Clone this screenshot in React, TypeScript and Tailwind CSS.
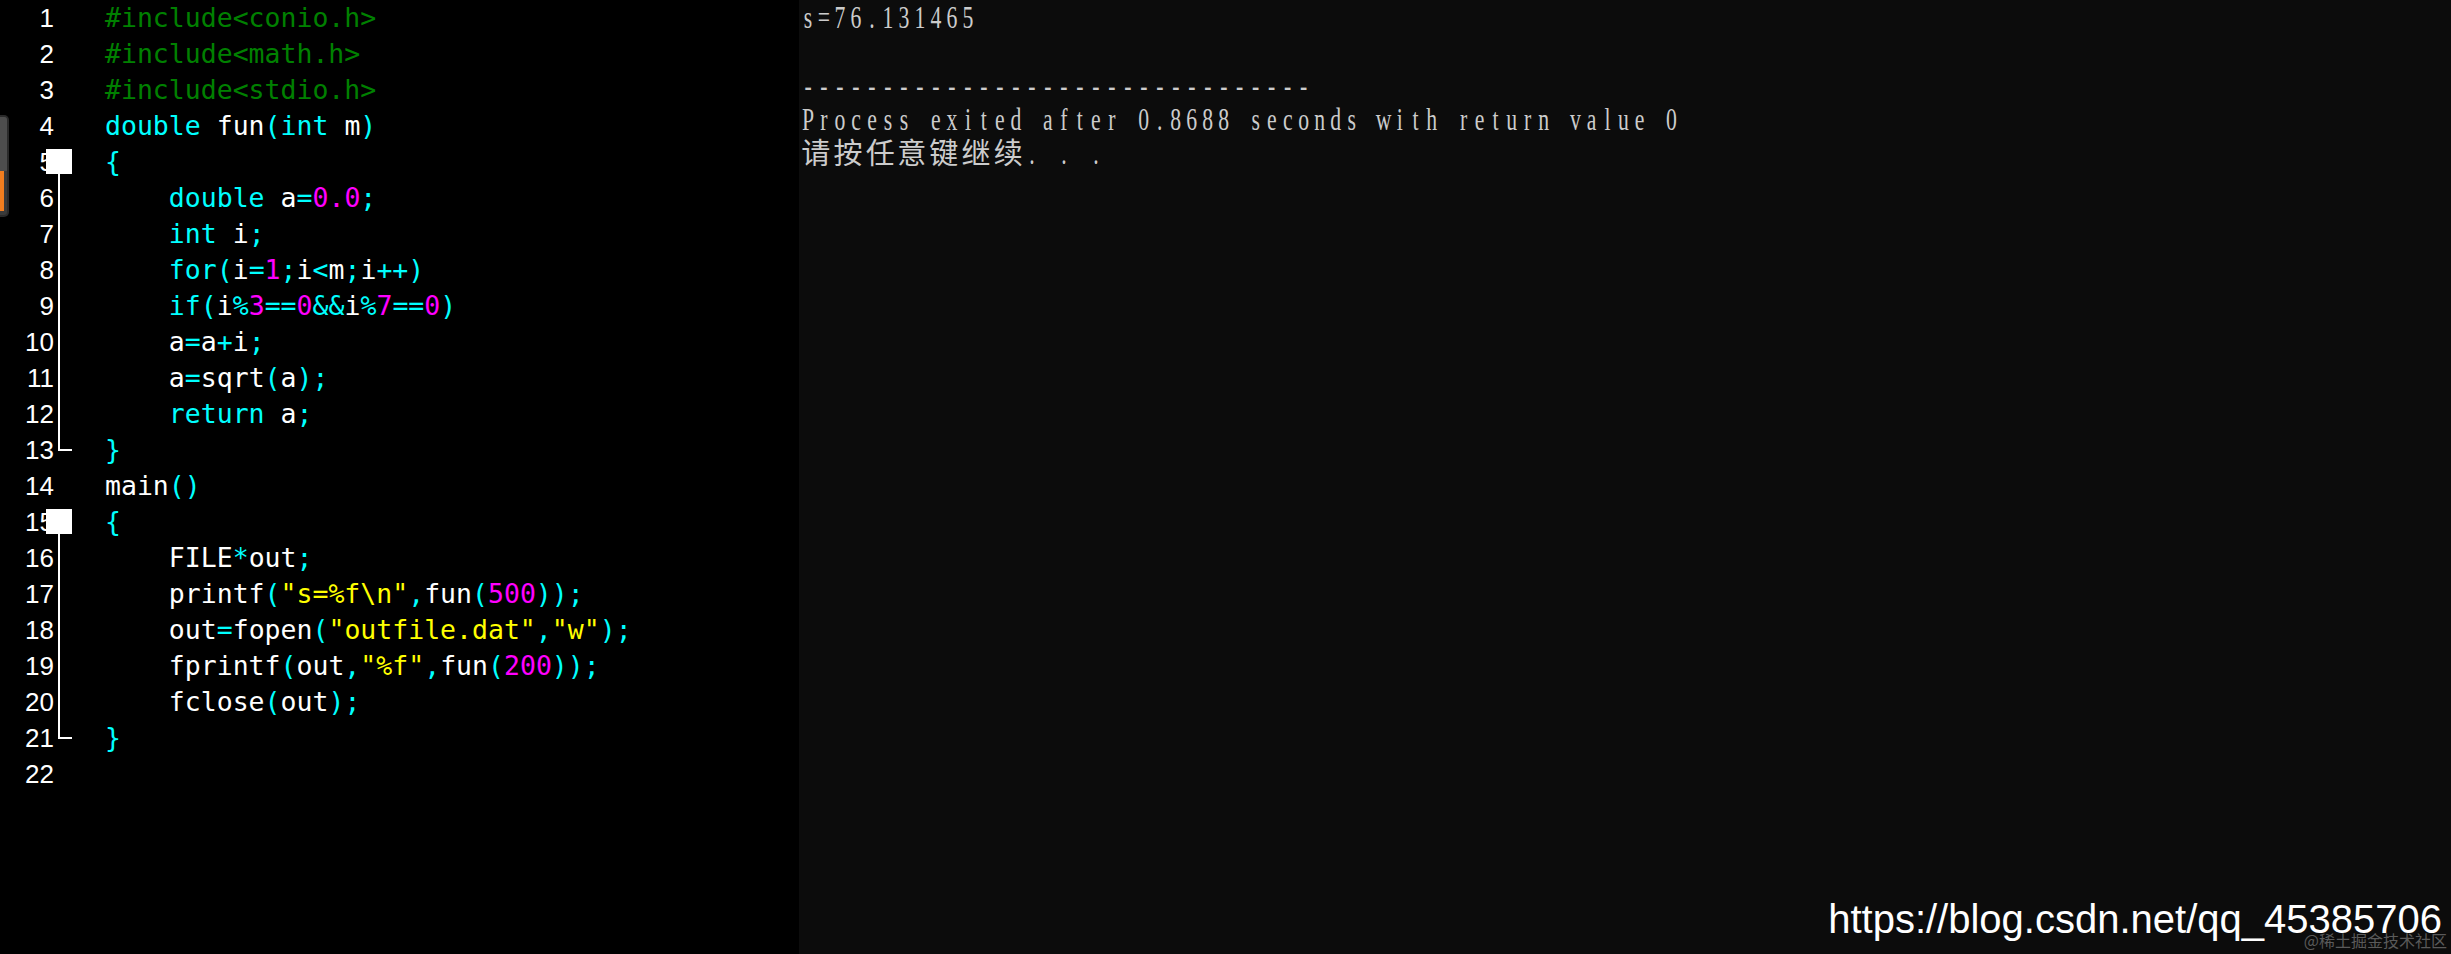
import React from "react";

const CODE = [
    "#include<conio.h>",
    "#include<math.h>",
    "#include<stdio.h>",
    "double fun(int m)",
    "{",
    "    double a=0.0;",
    "    int i;",
    "    for(i=1;i<m;i++)",
    "    if(i%3==0&&i%7==0)",
    "    a=a+i;",
    "    a=sqrt(a);",
    "    return a;",
    "}",
    "main()",
    "{",
    "    FILE*out;",
    '    printf("s=%f\\n",fun(500));',
    '    out=fopen("outfile.dat","w");',
    '    fprintf(out,"%f",fun(200));',
    "    fclose(out);",
    "}",
    "",
];

const KEYWORDS = ["double", "int", "for", "if", "return"];

const colorOf = (tok: string) => {
    if (tok.startsWith('"')) return "text-[#ffff00]";
    if (/^[0-9][0-9.]*$/.test(tok)) return "text-[#ff00ff]";
    if (KEYWORDS.includes(tok)) return "text-[#00ffff]";
    if (/^[A-Za-z_]/.test(tok)) return "text-white";
    return "text-[#00ffff]";
};

const CodeLine = ({ text }: { text: string }) => {
    if (text.startsWith("#")) {
        return <span className="text-[#008000]">{text}</span>;
    }
    const tokens = text.match(/"[^"]*"|[0-9][0-9.]*|[A-Za-z_]\w*|\s+|./g) || [];
    return (
        <>
            {tokens.map((tok, i) =>
                /^\s+$/.test(tok) ? (
                    <span key={i}>{tok}</span>
                ) : (
                    <span key={i} className={colorOf(tok)}>
                        {tok}
                    </span>
                )
            )}
        </>
    );
};

// console text: fixed cells (16px, CJK 32px). The row is laid out wide and
// squeezed to 70% so the serif glyphs look like the narrow console font.
const ConsoleLine = ({ text }: { text: string }) => (
    <div className="flex h-[34px] items-center origin-left scale-x-[0.7]">
        {Array.from(text).map((ch, i) =>
            /[\u4e00-\u9fff]/.test(ch) ? (
                <span key={i} className="inline-block w-[45.714px] text-center leading-none">
                    <span
                        className="inline-block scale-x-[1.4286] text-[29px]"
                        style={{ fontFamily: '"Noto Sans CJK SC", sans-serif' }}
                    >
                        {ch}
                    </span>
                </span>
            ) : (
                <span key={i} className="inline-block w-[22.857px] text-center leading-none">
                    {ch === " " ? "\u00a0" : ch}
                </span>
            )
        )}
    </div>
);

const FoldMarker = ({ startLine, endLine }: { startLine: number; endLine: number }) => {
    const top = (startLine - 1) * 36 + 5;
    const end = (endLine - 1) * 36 + 18;
    return (
        <>
            <div className="absolute left-[46px] w-[26px] h-[25px] bg-white" style={{ top }} />
            <div
                className="absolute left-[58px] w-[2px] bg-white"
                style={{ top: top + 25, height: end - top - 25 + 1 }}
            />
            <div className="absolute left-[58px] w-[14px] h-[2px] bg-white" style={{ top: end - 1 }} />
        </>
    );
};

export default function App() {
    return (
        <div className="flex w-[2451px] h-[954px] overflow-hidden">
            <div className="relative w-[799px] h-full bg-black">
                {CODE.map((line, i) => (
                    <div key={i} className="flex h-[36px] items-center">
                        <div
                            className="w-[55px] pr-[1px] text-right text-[26px] text-white"
                            style={{ fontFamily: '"Liberation Sans", sans-serif' }}
                        >
                            {i + 1}
                        </div>
                        <pre
                            className="pl-[50px] text-[26.5px] leading-none"
                            style={{ fontFamily: '"DejaVu Sans Mono", monospace' }}
                        >
                            <CodeLine text={line} />
                        </pre>
                    </div>
                ))}

                <FoldMarker startLine={5} endLine={13} />
                <FoldMarker startLine={15} endLine={21} />

                {/* edge of a window peeking in on the left */}
                <div className="absolute left-0 top-[115px] w-[9px] h-[102px] rounded-r-[5px] bg-[#3a3a3a] border-y-2 border-r-2 border-[#2a2a2a] overflow-hidden">
                    <div className="h-[54px] bg-[#4d4d4d]" />
                    <div className="h-[40px] w-[4px] bg-[#f07d1f]" />
                </div>
            </div>

            <div
                className="relative flex flex-1 flex-col bg-[#0c0c0c] pl-[1px] text-[31px] text-[#cccccc]"
                style={{ fontFamily: '"Liberation Serif", serif' }}
            >
                <ConsoleLine text="s=76.131465" />
                <ConsoleLine text="" />
                <ConsoleLine text="--------------------------------" />
                <ConsoleLine text="Process exited after 0.8688 seconds with return value 0" />
                <ConsoleLine text="请按任意键继续. . ." />

                <div className="mt-auto flex justify-end pr-[9px] pb-[15px]">
                    <span
                        className="text-[40px] leading-none text-white"
                        style={{ fontFamily: '"Liberation Sans", sans-serif' }}
                    >
                        https://blog.csdn.net/qq_45385706
                    </span>
                </div>
                <span
                    className="absolute right-[4px] bottom-[6px] text-[16px] leading-none text-[#5a5a5a]"
                    style={{ fontFamily: '"Noto Sans CJK SC", sans-serif' }}
                >
                    @稀土掘金技术社区
                </span>
            </div>
        </div>
    );
}
